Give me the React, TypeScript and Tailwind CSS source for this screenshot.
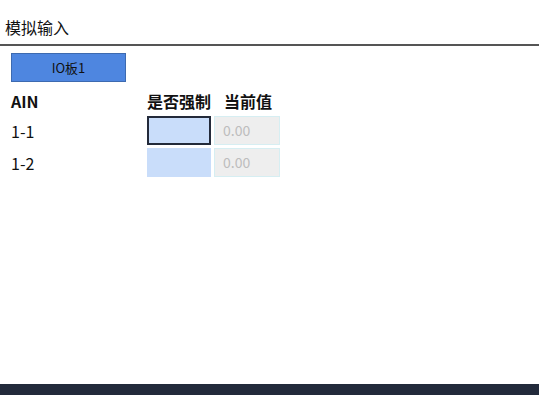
import React from 'react';

const rows = [
  { name: '1-1', active: true },
  { name: '1-2', active: false },
];

const App: React.FC = () => {
  return (
    <div className="h-screen flex flex-col bg-white text-[#111] font-['Noto_Sans_CJK_SC','Noto_Sans',sans-serif]">
      {/* Header */}
      <div className="h-[46px] flex items-end pb-[6px] pl-[5px] border-b-2 border-[#555]">
        <span className="text-[16px] leading-[22px]">模拟输入</span>
      </div>

      {/* Content */}
      <div className="flex-1 pl-[11px] pt-[7px]">
        <button className="w-[115px] h-[29px] bg-[#4e86e0] border border-[#3d6ab0] text-[13px] text-[#111] flex items-center justify-center">
          IO板1
        </button>

        <div className="mt-[4px] grid grid-cols-[133px_64px_66px] gap-x-[3px]">
          <div className="h-[30px] flex items-center font-bold text-[16px]">AIN</div>
          <div className="h-[30px] flex items-center font-bold text-[16px]">是否强制</div>
          <div className="h-[30px] flex items-center font-bold text-[16px] pl-[10px]">当前值</div>
        </div>

        <div className="flex flex-col gap-[3px]">
          {rows.map((r) => (
            <div key={r.name} className="grid grid-cols-[133px_64px_66px] gap-x-[3px] h-[29px]">
              <div className="flex items-center text-[16px]">{r.name}</div>
              <div
                className={
                  r.active
                    ? 'bg-[#c9ddfa] border-2 border-[#232a3a]'
                    : 'bg-[#c9ddfa]'
                }
              />
              <div className="bg-[#eeeeee] border border-[#d6eef2] flex items-center pl-[8px] text-[14px] text-[#bdbdbd]">
                0.00
              </div>
            </div>
          ))}
        </div>
      </div>

      {/* Footer */}
      <div className="h-[11px] bg-[#222a3b]" />
    </div>
  );
};

export default App;
